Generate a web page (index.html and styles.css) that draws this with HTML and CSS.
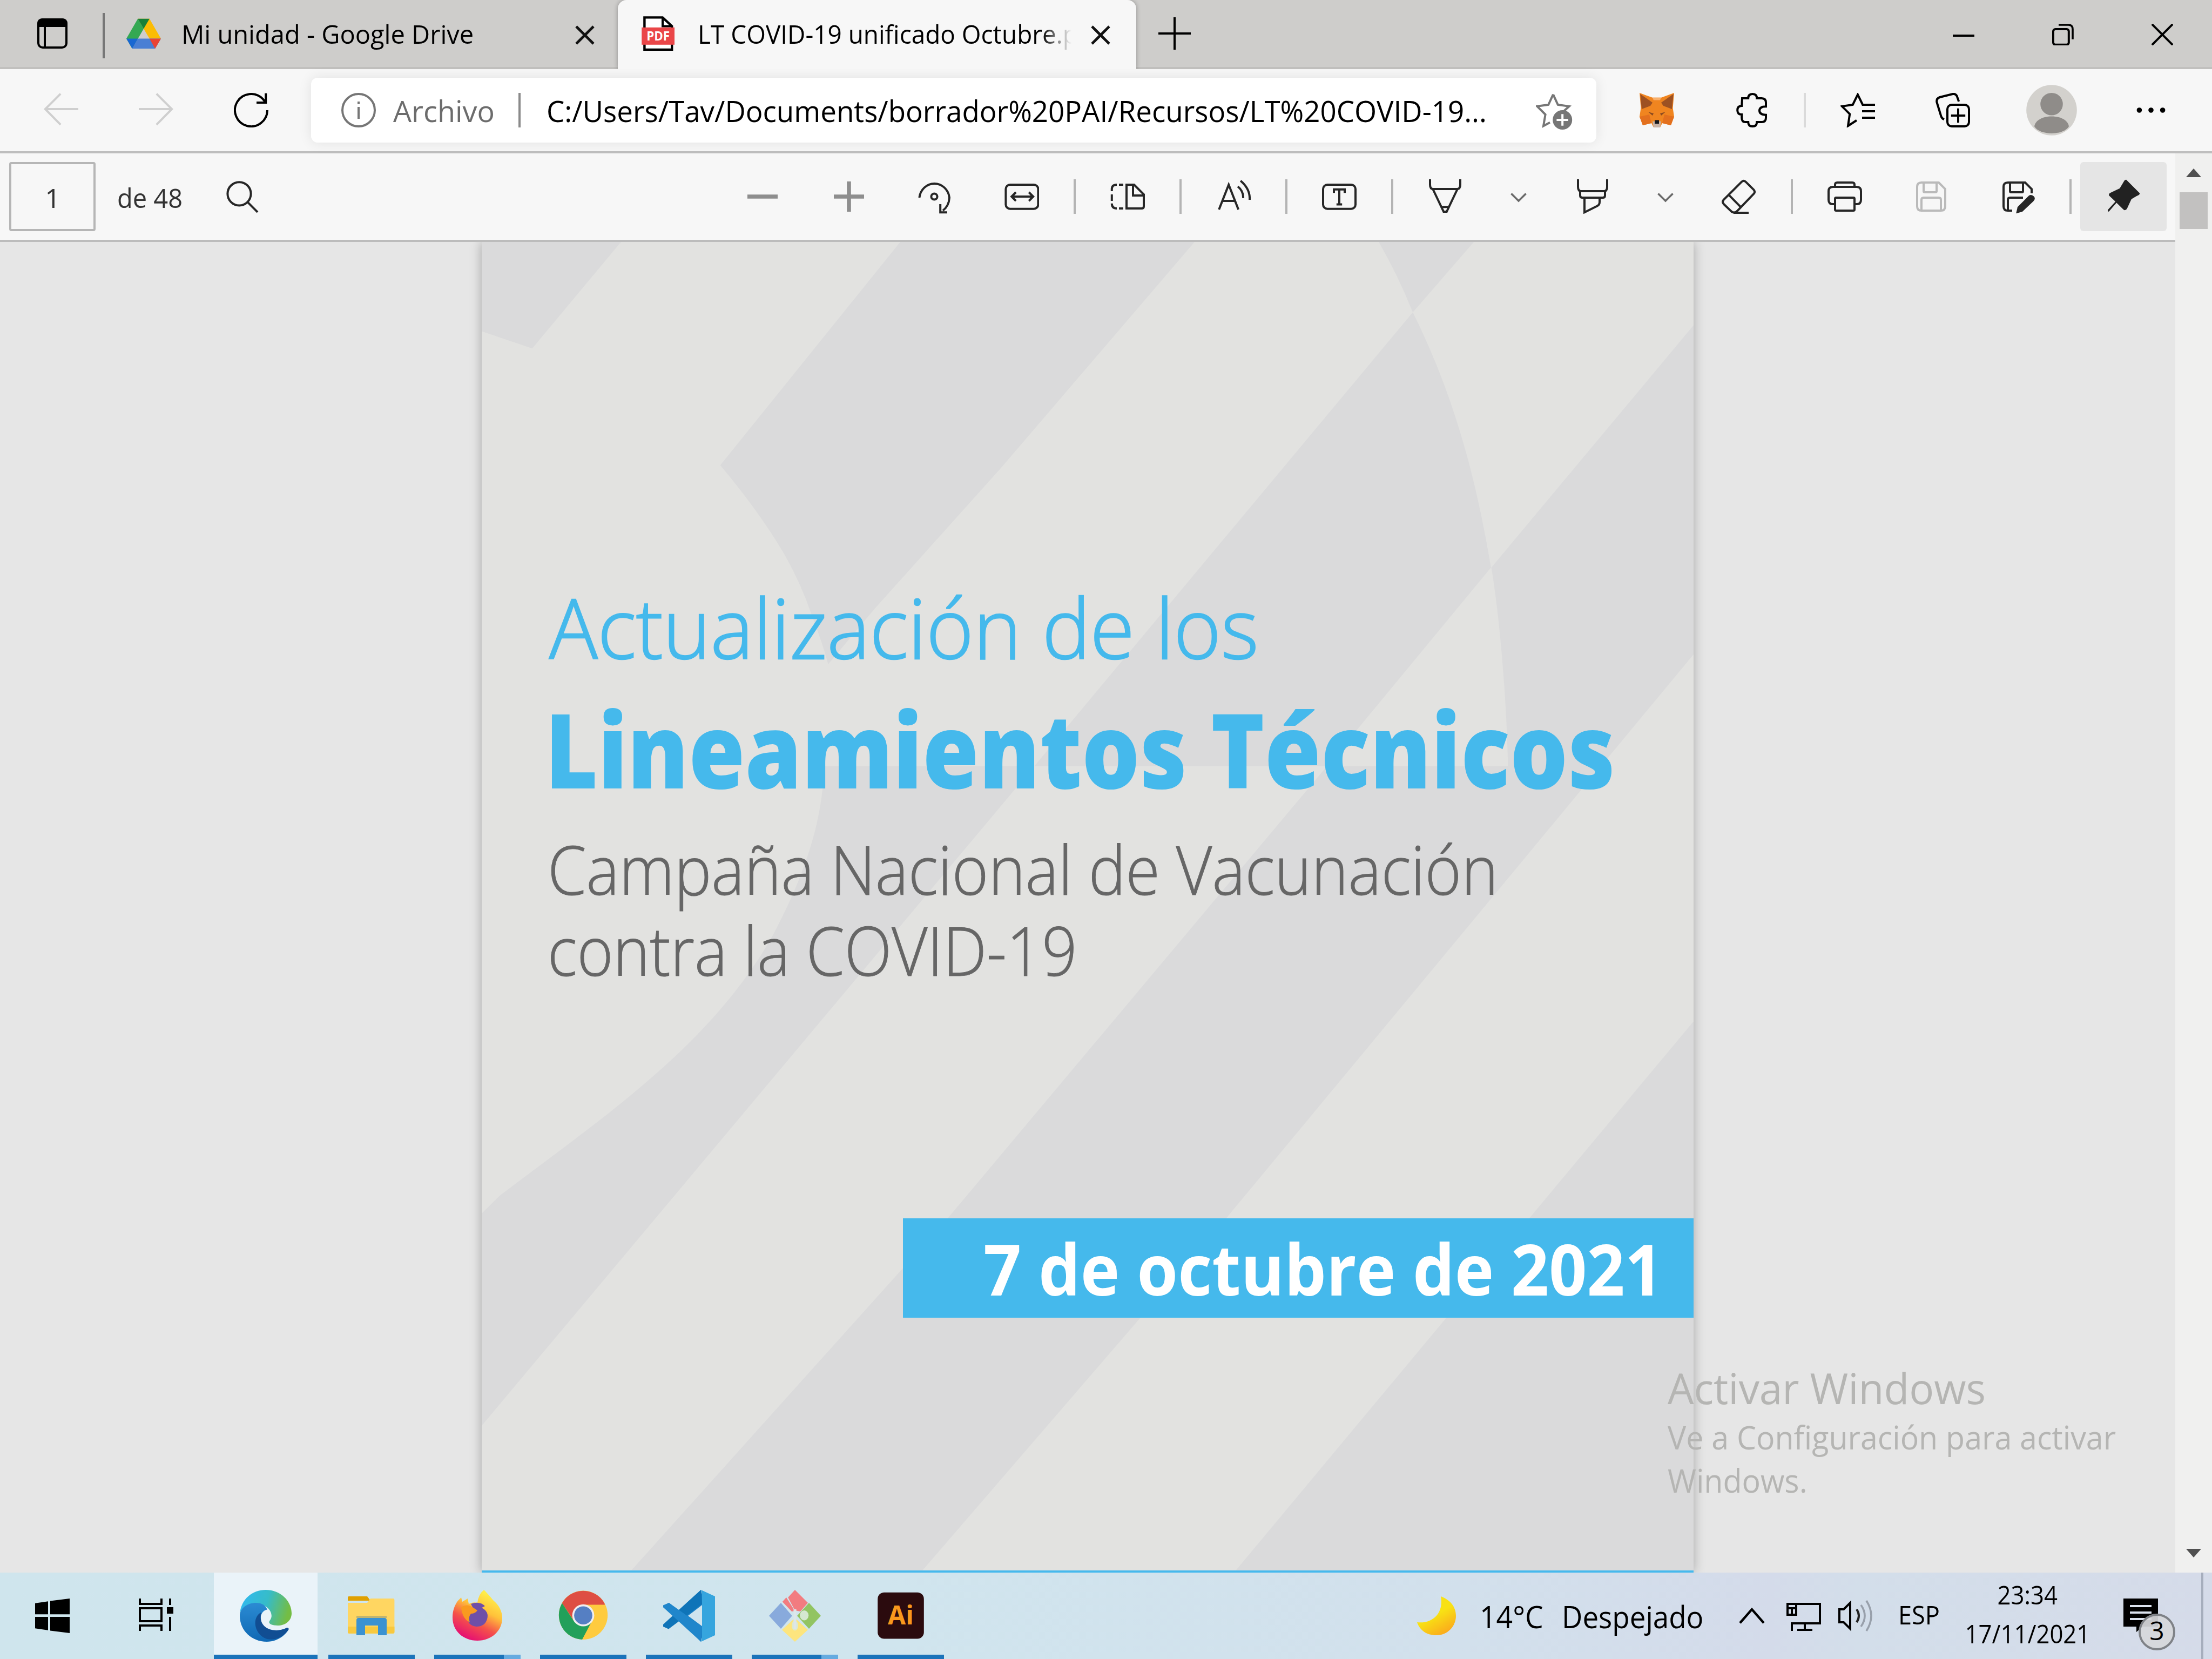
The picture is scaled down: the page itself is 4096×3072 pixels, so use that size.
FILE: index.html
```html
<!DOCTYPE html>
<html lang="es">
<head>
<meta charset="utf-8">
<title>LT COVID-19 unificado Octubre.pdf</title>
<link rel="stylesheet" href="styles.css">
</head>
<body>
<div class="desktop">
  <header class="tabstrip">
    <svg class="icon tabs-menu" viewBox="0 0 16 16"><rect x="1.5" y="1.5" width="13" height="13" rx="2" fill="none" stroke="#000"/><path d="M1 5V3.500Q1 1 3.500 1H12.500Q15 1 15 3.500V5Z"/><path d="M4.500 5V14" stroke="#000"/></svg>
    <span class="strip-line"></span>
    <div class="tab">
      <svg class="icon" viewBox="0 0 16 16"><path d="M5.300 1.200H10.700L16 10.400H10.700Z" fill="#fbbc04"/><path d="M5.300 1.200L0 10.400L2.700 15L8 5.800Z" fill="#34a853"/><path d="M5.300 1.200H10.700L8 5.800Z" fill="#188038"/><path d="M2.700 15H13.300L16 10.400H5.300Z" fill="#4a7fd4"/><path d="M0 10.400H5.300L2.700 15Z" fill="#1967d2"/><path d="M10.700 10.400H16L13.300 15Z" fill="#ea4335"/></svg>
      <span class="tab-title"><span class="t narrow-tab1">Mi unidad - Google Drive</span></span>
      <svg class="close" viewBox="0 0 9 9"><path d="M.5.5L8.500 8.500M8.500.5L.5 8.500" stroke="#111" stroke-width="1.200"/></svg>
    </div>
    <div class="tab active">
      <svg class="icon" viewBox="0 0 16 16"><path d="M1.600.6H10L14.300 4.600V15.500H1.600Z" fill="#fff" stroke="#000" stroke-width="1.100"/><path d="M10 .6V4.600H14.300" fill="none" stroke="#000"/><rect x=".3" y="5.200" width="15.200" height="8" fill="#ea4648"/><text x="7.900" y="11.300" text-anchor="middle" class="pdf-label">PDF</text></svg>
      <span class="tab-title fade"><span class="t narrow-tab2">LT COVID-19 unificado Octubre.pdf</span></span>
      <svg class="close" viewBox="0 0 9 9"><path d="M.5.5L8.500 8.500M8.500.5L.5 8.500" stroke="#111" stroke-width="1.200"/></svg>
    </div>
    <svg class="icon new-tab" viewBox="0 0 16 16"><path d="M8 .5V15.500M.5 8H15.500" stroke="#000"/></svg>
    <div class="window-buttons">
      <svg viewBox="0 0 10 10"><path d="M0 5.500H10" stroke="#000"/></svg>
      <svg viewBox="0 0 10 10"><rect x=".5" y="2.500" width="7.200" height="7.200" rx="1" fill="none" stroke="#000"/><path d="M3 .5H7.500Q9.500.5 9.500 2.500V7.200" fill="none" stroke="#000" stroke-width=".9"/></svg>
      <svg viewBox="0 0 10 10"><path d="M.2.2L9.800 9.800M9.800.2L.2 9.800" stroke="#000"/></svg>
    </div>
  </header>

  <nav class="navbar">
    <svg class="icon dim" viewBox="0 0 16 16"><path d="M16 7.500H.7M7.800.4L.7 7.500L7.800 14.700"/></svg>
    <svg class="icon dim" viewBox="0 0 16 16"><path d="M0 7.500H15.300M8.200.4L15.300 7.500L8.200 14.700"/></svg>
    <svg class="icon line" viewBox="0 0 16 16"><path d="M15.500 8A7.500 7.500 0 1 1 13.400 2.800L14.800 4.500M14.800.2V4.500H10.500"/></svg>
    <div class="address">
      <svg class="icon info" viewBox="0 0 16 16"><circle cx="8" cy="8" r="7.500"/><path d="M8 6.500V12M8 4V5.200"/></svg>
      <span class="scheme"><span class="t narrow-scheme">Archivo</span></span>
      <span class="address-line"></span>
      <span class="url"><span class="t narrow-url">C:/Users/Tav/Documents/borrador%20PAI/Recursos/LT%20COVID-19...</span></span>
      <svg class="fav-add" viewBox="0 0 17 17"><path d="M8 .7L10.200 5.500L15.400 6.200L12 9.300M8 .7L5.800 5.500L.6 6.200L4.400 10L3.500 15.300L6.500 13.700" fill="none" stroke="#767676"/><circle cx="12.300" cy="12.500" r="4.500" fill="#767676"/><path d="M12.300 9.800V15.200M9.600 12.500H15" stroke="#fff"/></svg>
    </div>
    <svg class="icon fox" viewBox="0 0 16 16"><path d="M0 0L6 2.200H10L16 0L15.400 7L16 11L14.500 15L10.500 14L9.500 16H6.500L5.500 14L1.500 15L0 11L.6 7Z" fill="#f08520"/><path d="M.3.5L6 4.500L5 6L1 7.500Z" fill="#9d5122"/><path d="M15.700.5L10 4.500L11 6L15 7.500Z" fill="#9d5122"/><path d="M6 2.200H10L9.500 3.400H6.500Z" fill="#f9b06d"/><path d="M0 11L4.500 10L5.500 14L1.500 15ZM16 11L11.500 10L10.500 14L14.500 15Z" fill="#e3701e"/><path d="M4 8.800L6.500 9.500L6 10.500ZM12 8.800L9.500 9.500L10 10.500Z" fill="#8a4a20"/><path d="M6 13.200H10L9.500 16H6.500Z" fill="#c9b3a6"/><rect x="7" y="12.600" width="2" height="1.700" fill="#16181c"/></svg>
    <svg class="icon line puzzle" viewBox="0 0 16 16"><path d="M3.500 2.500H6.300Q6.300.5 8.300.5T10.300 2.500H12.500Q14.500 2.500 14.500 4.500V6.300Q11.500 6.300 11.500 8.200T14.500 10.200V11.500Q14.500 13.500 12.500 13.500H10.300Q10.300 15.500 8.300 15.500T6.300 13.500H5Q3.300 13.500 3.300 11.500V10Q1.300 10 1.300 8T3.300 6Z"/></svg>
    <span class="nav-line"></span>
    <svg class="icon line" viewBox="0 0 16 16"><path d="M11 5.500H10.300L8 .8L5.700 5.500L.7 6.200L4.300 9.800L3.500 15.300L7.500 12.700M11 5.500H16M10 8.500H16M10 11.500H16"/></svg>
    <svg class="icon line collections" viewBox="0 0 16 16"><rect x="5.500" y="5.500" width="10" height="10" rx="2"/><path d="M10.500 7.200V13.800M7.200 10.500H13.800M4 12.300Q2.800 11.800 2.500 10.500L.6 4.300Q.3 2.600 2 2L8 .5Q9.500.3 10 1.700L10.800 4"/></svg>
    <svg class="avatar" viewBox="0 0 24 24"><circle cx="12" cy="12" r="11.700" fill="#d3d1cd"/><circle cx="12" cy="9.200" r="5.200" fill="#8f8c89"/><path d="M4 19.500C5 13.300 19 13.300 20 19.500C17.500 23.800 6.500 23.800 4 19.500Z" fill="#8f8c89"/></svg>
    <svg class="dots" viewBox="0 0 14 4"><circle cx="1.600" cy="2" r="1.200"/><circle cx="7" cy="2" r="1.200"/><circle cx="12.400" cy="2" r="1.200"/></svg>
  </nav>

  <main class="viewer">
    <div class="viewer-main">
      <div class="pdfbar">
        <span class="page-input">1</span>
        <span class="page-count"><span class="t narrow-count">de 48</span></span>
        <svg class="icon ink" viewBox="0 0 16 16"><circle cx="6.500" cy="6.700" r="5.400"/><path d="M10.400 10.600L15 15.200"/></svg>
        <div class="tools">
          <svg class="icon gray" viewBox="0 0 16 16"><path d="M1 8H15"/></svg>
          <svg class="icon gray" viewBox="0 0 16 16"><path d="M1 8H15M8 1V15"/></svg>
          <svg class="icon ink" viewBox="0 0 16 16"><path d="M.6 8.500A7 7.400 0 0 1 14.500 8.500Q14.300 12.300 11.500 14.500M10.300 11.500V15.300H13.500"/><circle cx="7.500" cy="8" r="1.400"/></svg>
          <svg class="icon ink" viewBox="0 0 16 16"><rect x=".6" y="2.500" width="15" height="11.200" rx="2"/><path d="M3.500 8H13M5.300 6L3.300 8L5.300 10M11.300 6L13.300 8L11.300 10"/></svg>
          <span class="sep"></span>
          <svg class="icon ink" viewBox="0 0 16 16"><path d="M7.500 2.500H11L15.500 7V12.500Q15.500 13.500 14.500 13.500H7.500ZM10.500 2.500V7.500H15.500M6 2.500H4M3 2.500Q.7 2.500.7 4.500V5.500M.7 7V10M.7 11.200Q.7 13.500 3 13.500M4 13.500H6"/></svg>
          <span class="sep"></span>
          <svg class="icon ink" viewBox="0 0 16 16"><path d="M1.300 14L5.800 2.500L10.300 14M2.800 10H8.800M10 3.300Q12.700 5.500 12.500 8.700M11.300.7Q15.800 4.500 15.500 9.500"/></svg>
          <span class="sep"></span>
          <svg class="icon ink" viewBox="0 0 16 16"><rect x=".5" y="2.500" width="15" height="11.200" rx="2"/><path d="M5.500 6.300V4.700H10.500V6.300M8 5V11.500M6.700 11.600H9.300"/></svg>
          <span class="sep"></span>
          <svg class="icon ink" viewBox="0 0 16 16"><path d="M1 0V2.500Q1 4.500 2.500 4.500H13.500Q15 4.500 15 2.500V0M2.300 4.500L7.300 15H8.700L13.700 4.500M6.700 12.800H9.300"/></svg>
          <svg class="chev" viewBox="0 0 8 8"><path d="M.6 2.600L4 6L7.400 2.600" fill="none" stroke="#6a6a6a" stroke-width=".9"/></svg>
          <svg class="icon ink" viewBox="0 0 16 16"><path d="M1.500 0V3.500Q1.500 5.500 3 5.500H13.500Q15 5.500 15 3.500V0M2.500 5.500V7.500Q2.500 8.500 3.500 8.500H13Q14 8.500 14 7.500V5.500M4.500 8.500V15.300L10.500 12.300Q11.500 11.800 11.500 10.500V8.500"/></svg>
          <svg class="chev" viewBox="0 0 8 8"><path d="M.6 2.600L4 6L7.400 2.600" fill="none" stroke="#6a6a6a" stroke-width=".9"/></svg>
          <svg class="icon ink" viewBox="0 0 16 16"><path d="M9.200 1.200Q10.200.2 11.200 1.200L14.800 4.800Q15.800 5.800 14.800 6.800L7.300 14.600Q5.700 16.200 4.200 14.600L1 11.500Q0 10.400 1 9.400ZM3.300 7.200L8.900 12.900M5.500 15.500H12.500"/></svg>
          <span class="sep"></span>
          <svg class="icon ink" viewBox="0 0 16 16"><path d="M3.500 11.500H2.500Q.5 11.500.5 9.500V5.500Q.5 3.500 2.500 3.500H13.500Q15.500 3.500 15.500 5.500V9.500Q15.500 11.500 13.500 11.500H12.500M3.500 3.500V2.500Q3.500 1.500 4.500 1.500H11.500Q12.500 1.500 12.500 2.500V3.500"/><rect x="3.500" y="8.500" width="9" height="6" rx=".5"/></svg>
          <svg class="icon pale" viewBox="0 0 16 16"><path d="M3.500 1.500H11.500L14.500 4.500V12.500Q14.500 14.500 12.500 14.500H3.500Q1.500 14.500 1.500 12.500V3.500Q1.500 1.500 3.500 1.500ZM4.500 1.500V5.500Q4.500 6 5 6H10Q10.500 6 10.500 5.500V1.500M3.500 14.500V9.500Q3.500 8.500 4.500 8.500H11.500Q12.500 8.500 12.500 9.500V14.500"/></svg>
          <svg class="icon ink" viewBox="0 0 16 16"><path d="M5.500 14.500H3.500Q1.500 14.500 1.500 12.500V3.500Q1.500 1.500 3.500 1.500H11.500L14.500 4.500V6.500M4.500 1.500V5.500Q4.500 6 5 6H10Q10.500 6 10.500 5.500V1.500M3.500 14.500V9.500Q3.500 8.500 4.500 8.500H10.500"/><path d="M7.300 15.800L8 12.800L13.300 7.500Q14.500 6.800 15.500 7.900T15.300 10.200L10.200 15Z" class="solid"/></svg>
          <span class="sep"></span>
          <span class="pin"><svg class="icon" viewBox="0 0 16 16"><path d="M9.300.2L15.600 6.500Q15.500 7.300 14 7.800L11.700 9.200L9.700 13.500Q9 14.800 8 14L4.800 10.900L1.200 15L.7 14.700L.9 14L4.300 10.300L1.300 7.500Q1 6.500 2.500 6L6.300 4.200L8.200 1Q8.600.1 9.300.2Z" fill="#222"/></svg></span>
        </div>
      </div>
      <div class="canvas">
        <article class="page">
          <svg class="pattern" viewBox="19.300 10.100 1527.600 1546" preserveAspectRatio="none">
            <path d="M19 10H195L83 134L19 114Z"/>
            <path d="M547 10H918L675.500 271.400L514 437.600L456 501.600Q450 480 435.400 444.500Q422 408 401.700 375Q370 325 320 270Z"/>
            <path d="M1150 10H1270L1193 92Q1175 50 1150 10Z"/>
            <path d="M1193 92C1240 180 1270 270 1291.500 389L1085 620H716Z"/>
            <path d="M1547 107L1292 389C1303 450 1311 540 1313 620H1085L607 1146L208 1556H575L958 1146L1547 490Z"/>
            <path d="M716 620L19 1388V1141L42 1120C170 1030 310 945 388 814C430 740 449 680 451 620Z"/>
            <path d="M1547 917L1340 1146L970 1556H1547Z"/>
          </svg>
          <div class="cover">
            <p class="cover-kicker"><span class="t narrow-kicker">Actualización de los</span></p>
            <h1 class="cover-title"><span class="t narrow-title">Lineamientos Técnicos</span></h1>
            <p class="cover-sub"><span class="t narrow-sub">Campaña Nacional de Vacunación</span><br><span class="t narrow-sub2">contra la COVID-19</span></p>
            <p class="cover-date"><span class="t narrow-date">7 de octubre de 2021</span></p>
          </div>
        </article>
      </div>
    </div>
    <div class="scrollbar">
      <svg viewBox="0 0 7 4"><path d="M0 4L3.500 0L7 4Z" fill="#505050"/></svg>
      <span class="scroll-thumb"></span>
      <svg class="down" viewBox="0 0 7 4"><path d="M0 0L3.500 4L7 0Z" fill="#505050"/></svg>
    </div>
    <div class="watermark">
      <p class="wm-title"><span class="t narrow-wm1">Activar Windows</span></p>
      <p class="wm-text"><span class="t narrow-wm2">Ve a Configuración para activar</span><br><span class="t narrow-wm2">Windows.</span></p>
    </div>
  </main>

  <footer class="taskbar">
    <svg class="icon start" viewBox="0 0 16 16"><path d="M0 2.200L6 1.300V7.300H0ZM7 1.150L16 0V7.300H7ZM0 8.500H6V14.700L0 13.800ZM7 8.500H16V16L7 14.900Z"/></svg>
    <svg class="icon taskview" viewBox="0 0 16 16"><path d="M.5 0V2.500H10.500V0M.5 4.500H10.500V10.500H.5ZM.5 15V12.500H10.500V15M14.500 0V3M14.500 8.500V15" fill="none" stroke="#000"/><rect x="13" y="4" width="3" height="3"/></svg>
    <div class="task current">
      <svg class="big" viewBox="0 0 24 24">
        <defs>
          <linearGradient id="eg" x1="0" x2="1" y1=".1" y2=".3"><stop offset="0" stop-color="#31b8f2"/><stop offset=".55" stop-color="#36bcc8"/><stop offset="1" stop-color="#74bd44"/></linearGradient>
          <linearGradient id="eb" x1="0" x2="0" y1="0" y2="1"><stop offset="0" stop-color="#2b8bd3"/><stop offset="1" stop-color="#0f68b4"/></linearGradient>
        </defs>
        <path d="M.1 10.500C.8 4.300 5.800 0 12 0C18.900 0 24 5.200 24 10.800C24 14.400 21 16.500 17.500 16.500C15.300 16.500 13.600 15.900 13.600 15C13.600 14.200 14.700 13.600 14.700 12C14.700 9 11.500 6.500 7.500 6.500C4 6.500 1.200 8.200.1 10.500Z" fill="url(#eg)"/>
        <path d="M12.700 9.100C8.500 9.800 8.200 17.500 14.500 18.700C17.500 19.300 20 18.500 21.500 17.700C22.200 17.300 22.900 17.800 22.500 18.500C20.300 22 16.500 24 12.500 24C5.500 24 0 18.800 0 12C0 8.500 3.500 6 7.500 6C10.200 6 12 7.200 12.700 9.100Z" fill="url(#eb)"/>
        <path d="M10 10.300C5 13 7 21.500 13 22.800C17 23.400 20.500 21.500 22.500 18.500C22.900 17.800 22.200 17.300 21.500 17.700C16 20.300 8 18 10 10.300Z" fill="#114e93"/>
      </svg>
    </div>
    <div class="task"><svg class="big" viewBox="0 0 24 24"><path d="M1 3.500Q1 3 1.500 3H10L11.500 5H1Z" fill="#e0a000"/><path d="M1 6H10L11.500 4H22Q22.600 4 22.600 4.600V19.500Q22.600 20.200 22 20.200H1.600Q1 20.200 1 19.500Z" fill="#ffd661"/><path d="M1 17H22.600V19.500Q22.600 20.200 22 20.200H1.600Q1 20.200 1 19.500Z" fill="#f8c93f"/><path d="M5 12H19V13H5Z" fill="#c1b46f"/><path d="M6 13H18Q19 13 19 14V21H15V16.500H9V21H5V14Q5 13 6 13Z" fill="#3b92d1"/></svg></div>
    <div class="task grouped"><svg class="big" viewBox="0 0 24 24">
      <defs><linearGradient id="ff" x1=".8" x2=".35" y1=".1" y2="1"><stop offset="0" stop-color="#fff04a"/><stop offset=".35" stop-color="#ffc23a"/><stop offset=".65" stop-color="#f5524a"/><stop offset="1" stop-color="#e50d74"/></linearGradient></defs>
      <path d="M15 0C17 2 18 3.200 19.500 5C22 7 23.500 10 23.500 13C23.500 19 18.500 23.500 12 23.500S.5 19 .5 12.800C.5 9.500 1.500 7 3 5L4.500 3.500L5 5.500L7.500 4L8 6.500Q10 5.500 12 6Q12.500 2 15 0Z" fill="url(#ff)"/>
      <path d="M9 6.500Q13 5 15.500 7.500L14 8.300Q17.500 10 16.500 13.500Q15.500 17 11.500 17Q7.500 16.500 7.500 13Q7.500 11 9.500 10.700L11.500 10Q11.500 9 10 8.500Z" fill="#6f4fa8"/>
      <path d="M4.500 8Q7 6.500 9 7.500L12 9.500Q11 11 9 11Q7.500 13 8.500 15Q5 13.500 4.500 8Z" fill="#f99a20"/>
    </svg></div>
    <div class="task"><svg class="big" viewBox="0 0 24 24"><circle cx="12" cy="11.700" r="11.300" fill="#fecb3f"/><path d="M2.200 6.100A11.300 11.300 0 0 1 21.800 6.100L22 6.900H12L7.500 14Z" fill="#de4e43"/><path d="M2.200 6.100A11.300 11.300 0 0 0 11.500 23L16 14.500L7.500 14.200Z" fill="#22a05a"/><circle cx="12" cy="11.800" r="5.100" fill="#f0eef0"/><circle cx="12" cy="11.800" r="4.200" fill="#557fc3"/></svg></div>
    <div class="task"><svg class="big" viewBox="0 0 24 24"><path d="M17.500 0L7 9.500L2.700 6L0 7.200V8L14 20.500L17.500 24L18.500 20V4Z" fill="#1a80c6"/><path d="M17.500 0L0 16V17L2.500 18.100L18 6.500Z" fill="#0f74b8"/><path d="M2.700 6L0 7.200V8L17.500 24L18 17Z" fill="#2086cb"/><path d="M18 7V16.800L11.500 12Z" fill="#d0e4ee"/><path d="M17.500 0L24 3V21L17.500 24Q18 23.500 18 22V2Q18 .5 17.500 0Z" fill="#36a5de"/></svg></div>
    <div class="task grouped"><svg class="big" viewBox="0 0 24 24"><path d="M5.500 6L10.700 12L5.500 18L0 12Z" fill="#88aadc"/><path d="M12 0L18 6L14.500 10L12 9.500L8.800 3.500Z" fill="#f27c80"/><path d="M8 3.500L12 9.800L10.500 10L6.200 5.500Z" fill="#f27c80"/><path d="M18.500 6L24 12L18.500 18L13 12Z" fill="#92c462"/><ellipse cx="16.300" cy="11.800" rx="2" ry="2.300" fill="#d5e8d0"/><path d="M12 13L18 18.500L12 24L6 18.500Z" fill="#fde57e"/><ellipse cx="12" cy="16.500" rx="1.500" ry="2.300" fill="#dde9cf"/><path d="M12 9V18" stroke="#dde6ea" stroke-width="1.300"/></svg></div>
    <div class="task"><svg class="big" viewBox="0 0 24 24"><rect x="1.300" y="1.200" width="21.400" height="21.400" rx="3" fill="#2b0b0e"/><text x="12" y="16" text-anchor="middle" class="ai-label">Ai</text></svg></div>

    <div class="tray">
      <svg class="moon" viewBox="0 0 18 18"><defs><linearGradient id="mo" x1=".3" x2=".7" y1=".3" y2="1"><stop offset=".3" stop-color="#f8e114"/><stop offset="1" stop-color="#fba81d"/></linearGradient></defs><path d="M11 0C15 1.500 18 4.500 18 9C18 14 14 18 9 18C4.500 18 1.300 15.800 0 12C7 12.800 12.500 8 11 0Z" fill="url(#mo)"/></svg>
      <span class="weather"><span class="temp"><span class="t narrow-temp">14°C</span></span><span class="t narrow-sky">Despejado</span></span>
      <svg class="caret" viewBox="0 0 12 8"><path d="M.5 7.300L6 1L11.500 7.300" fill="none" stroke="#000" stroke-width="1.100"/></svg>
      <svg class="icon" viewBox="0 0 16 16"><path d="M2 2.500H15.500V11.500H2.500V15M8.500 11.500V14.500M5 14.500H12M.5 2.500H4.500V7.500H.5ZM.5 4.500H4.500M2.500 5V7" fill="none" stroke="#000"/></svg>
      <svg class="icon speaker" viewBox="0 0 16 16"><path d="M5.500 2V14L2.500 11H.5V5H2.500Z" fill="none" stroke="#000"/><path d="M8.500 5Q10.500 8 8.500 11" fill="none" stroke="#222"/><path d="M10.500 3Q14 8 10.500 13M13 1Q17.500 8 13 15" fill="none" stroke="#98a0ab" stroke-width=".9"/></svg>
      <span class="lang"><span class="t narrow-lang">ESP</span></span>
      <span class="clock"><span class="t narrow-clock">23:34</span><br><span class="t narrow-clock">17/11/2021</span></span>
      <span class="notif"><svg class="icon" viewBox="0 0 16 16"><path d="M0 0H16V13H9L6 15.500V13H0Z"/><path d="M3 3.500H13M3 6.500H13M3 9.500H13" stroke="#dbe2ee"/></svg><span class="badge">3</span></span>
      <span class="show-desktop"></span>
    </div>
  </footer>
</div>
</body>
</html>
```
FILE: styles.css
```css
* { box-sizing: border-box; }
body { margin: 0; font-family: "Open Sans", "Noto Sans", sans-serif; color: #000; background: #e6e6e6; }
p, h1 { margin: 0; font-weight: inherit; }
svg { display: block; flex: none; }

/* Slightly condensed text runs */
.t { display: inline-block; white-space: nowrap; transform-origin: 0 50%; }
.narrow-tab1 { transform: scaleX(.98); }
.narrow-tab2 { transform: scaleX(.957); }
.narrow-scheme { transform: scaleX(.98); }
.narrow-url { transform: scaleX(.961); }
.narrow-count { transform: scaleX(.94); }
.narrow-kicker { transform: scaleX(.97); margin-left: -1px; }
.narrow-title { transform: scaleX(.879); margin-left: -9px; }
.narrow-sub { transform: scaleX(.923); margin-left: -4px; }
.narrow-sub2 { transform: scaleX(.916); margin-left: -4px; }
.narrow-date { transform: scaleX(.937); margin-left: -2px; }
.narrow-wm1 { transform: scaleX(.981); }
.narrow-wm2 { transform: scaleX(.939); }
.narrow-temp { transform: scaleX(.955); margin-left: -4px; }
.narrow-sky { transform: scaleX(.945); margin-left: -4px; }
.narrow-lang { transform: scaleX(.94); margin-left: -3px; }
.narrow-clock { transform: scaleX(.91); transform-origin: 50% 50%; }

.desktop { width: 4096px; height: 3072px; display: flex; flex-direction: column; overflow: hidden; }
.icon { width: 64px; height: 64px; }

/* Tab strip */
.tabstrip { height: 128px; display: flex; align-items: center; background: #cecdcb; padding: 0 0 4px 65px; box-shadow: inset 0 -4px #c1c0be; flex: none; }
.strip-line { width: 4px; height: 84px; margin: 8px 0 0 61px; background: #777; }
.tab { display: flex; align-items: center; width: 950px; height: 128px; margin-bottom: -4px; padding: 0 0 4px 40px; font-size: 48px; }
.tab .icon { margin-right: 38px; }
.tab-title { flex: 1; overflow: hidden; white-space: nowrap; }
.close { width: 36px; height: 36px; margin: 6px 43px 0 0; }
.tab.active { width: 960px; background: #f7f7f7; border-radius: 16px 16px 0 0; box-shadow: 0 0 8px rgba(0, 0, 0, .3); clip-path: inset(0 -8px 0 -8px); padding-left: 43px; }
.tab.active .icon { margin-right: 41px; }
.tab.active .close { margin-left: 36px; margin-right: 48px; }
.fade { -webkit-mask-image: linear-gradient(90deg, #000 92%, transparent 100%); mask-image: linear-gradient(90deg, #000 92%, transparent 100%); }
.pdf-label { font: 700 5.600px "Open Sans", sans-serif; fill: #fff; }
.new-tab { margin-left: 39px; }
.window-buttons { display: flex; margin-left: auto; padding-right: 72px; gap: 144px; }
.window-buttons svg { width: 40px; height: 40px; margin-top: 4px; }

/* Address row */
.navbar { height: 156px; display: flex; align-items: center; background: #f7f7f7; border-bottom: 4px solid #bebebe; padding-left: 81px; flex: none; }
.navbar > .icon + .icon { margin-left: 112px; }
.dim { fill: none; stroke: #cfcfcf; }
.line { fill: none; stroke: #000; }
.address { display: flex; align-items: center; width: 2380px; height: 120px; margin-left: 79px; padding: 0 44px 0 56px; background: #fff; border-radius: 12px; box-shadow: 0 0 24px rgba(0, 0, 0, .09); font-size: 55px; }
.info { fill: none; stroke: #767676; margin-right: 32px; }
.scheme { width: 232px; color: #6c6c6c; }
.address-line { width: 4px; height: 64px; background: #8a8a8a; margin-right: 48px; }
.url { flex: 1; }
.fav-add { width: 68px; height: 68px; margin-top: 4px; }
.navbar > .fox { margin-left: 80px; }
.nav-line { width: 4px; height: 64px; margin: 0 64px; background: #dadada; }
.navbar > .avatar { width: 96px; height: 96px; margin-left: 103px; }
.dots { width: 56px; height: 16px; margin-left: 108px; }

/* PDF viewer */
.viewer { flex: 1; display: flex; position: relative; min-height: 0; }
.viewer-main { flex: 1; display: flex; flex-direction: column; min-width: 0; }
.pdfbar { height: 164px; display: flex; align-items: center; padding: 0 16px 0 17px; background: #f7f7f7; border-bottom: 4px solid #bcbcbc; font-size: 50px; color: #333; flex: none; }
.page-input { width: 160px; height: 128px; border: 4px solid #b6b6b6; border-radius: 4px; display: flex; align-items: center; justify-content: center; padding: 3px 0 0 1px; }
.page-count { width: 200px; margin: 3px 0 0 40px; }
.pdfbar .ink, .pdfbar .gray, .pdfbar .pale { fill: none; stroke: #262626; }
.pdfbar .gray { stroke: #8e8e8e; stroke-width: 1.900; }
.pdfbar .pale { stroke: #bababa; }
.pdfbar .solid { fill: #262626; stroke: none; }
.tools { display: flex; align-items: center; margin-left: auto; }
.tools .icon + .icon { margin-left: 96px; }
.sep { width: 4px; height: 64px; margin: 0 64px; background: #b4b4b4; }
.chev { width: 32px; height: 32px; margin: 0 88px; }
.pin { width: 160px; height: 128px; margin-left: -48px; background: #e5e5e5; border-radius: 6px; display: flex; align-items: center; justify-content: center; }
.canvas { flex: 1; background: #e6e6e6; min-height: 0; }
.page { width: 2244px; height: 2464px; margin-left: 892px; background: #e2e2e0; border-bottom: 4px solid #46b9ed; box-shadow: 0 0 20px rgba(0, 0, 0, .28); clip-path: inset(0 -24px 0 -24px); display: grid; grid-template-columns: 2244px; }
.pattern { grid-area: 1 / 1; width: 2244px; height: 2460px; fill: #dadadb; }
.cover { grid-area: 1 / 1; padding: 622px 0 0 126px; position: relative; color: #45b9ec; min-width: 0; }
.cover-kicker { font-size: 154px; line-height: 180px; font-weight: 300; -webkit-text-stroke: 2.500px currentColor; }
.cover-title { font-size: 192px; line-height: 271px; font-weight: 800; }
.cover-sub { font-size: 125px; line-height: 150px; font-weight: 300; color: #666; margin-top: 13px; -webkit-text-stroke: 1px currentColor; }
.cover-date { margin: 422px 0 0 654px; height: 184px; padding-left: 151px; line-height: 184px; font-size: 131px; font-weight: 700; color: #fff; background: #45b9ec; }

.scrollbar { width: 68px; background: #f0f0ef; display: flex; flex-direction: column; align-items: center; padding: 28px 0 28px; flex: none; }
.scrollbar svg { width: 28px; height: 16px; }
.scroll-thumb { width: 52px; height: 68px; margin-top: 28px; background: #c2c1c0; }
.scrollbar .down { margin-top: auto; }

.watermark { position: absolute; left: 3088px; top: 2233px; color: #b5b5b3; }
.wm-title { font-size: 78px; line-height: 106px; }
.wm-text { font-size: 61px; line-height: 80px; margin-top: -2px; }

/* Taskbar */
.taskbar { height: 160px; display: flex; align-items: center; flex: none; background: linear-gradient(90deg, #cfe5ed 0%, #d0e5ee 40%, #d2e0ec 66%, #d4dbea 80%, #d3deea 84%, #d5dbe9 100%); }
.start { margin-left: 65px; }
.taskview { margin-left: 128px; }
.task { width: 160px; height: 160px; margin-right: 36px; display: flex; justify-content: center; align-items: center; border-bottom: 8px solid #1b73ba; padding-top: 8px; flex: none; }
.task.current { width: 192px; margin: 0 20px 0 75px; background: #eaf3f9; }
.task.grouped { border-image: linear-gradient(90deg, #1b73ba 80%, #66abe0 80%) 1; border-style: solid; border-width: 0 0 8px; }
.big { width: 96px; height: 96px; }
.ai-label { font: 700 12px "Open Sans", sans-serif; fill: #f8981d; }
.tray { display: flex; align-items: center; margin-left: auto; height: 160px; }
.moon { width: 72px; height: 72px; }
.weather { display: flex; margin: 2px 0 0 48px; width: 476px; font-size: 56px; }
.temp { width: 152px; }
.caret { width: 48px; height: 32px; }
.tray > .icon { margin-left: 40px; }
.tray > .speaker { margin-left: 32px; }
.lang { margin: -6px 0 0 50px; width: 74px; font-size: 48px; }
.clock { width: 256px; margin: -6px 0 0 34px; text-align: center; font-size: 48px; line-height: 72px; }
.notif { position: relative; margin-left: 50px; width: 144px; }
.badge { position: absolute; left: 28px; top: 28px; width: 68px; height: 68px; border-radius: 50%; border: 4px solid #7f8287; background: rgba(214, 215, 218, .93); font-size: 48px; font-weight: 500; line-height: 54px; text-align: center; }
.show-desktop { width: 20px; height: 160px; border-left: 4px solid #a6aebd; }
```
